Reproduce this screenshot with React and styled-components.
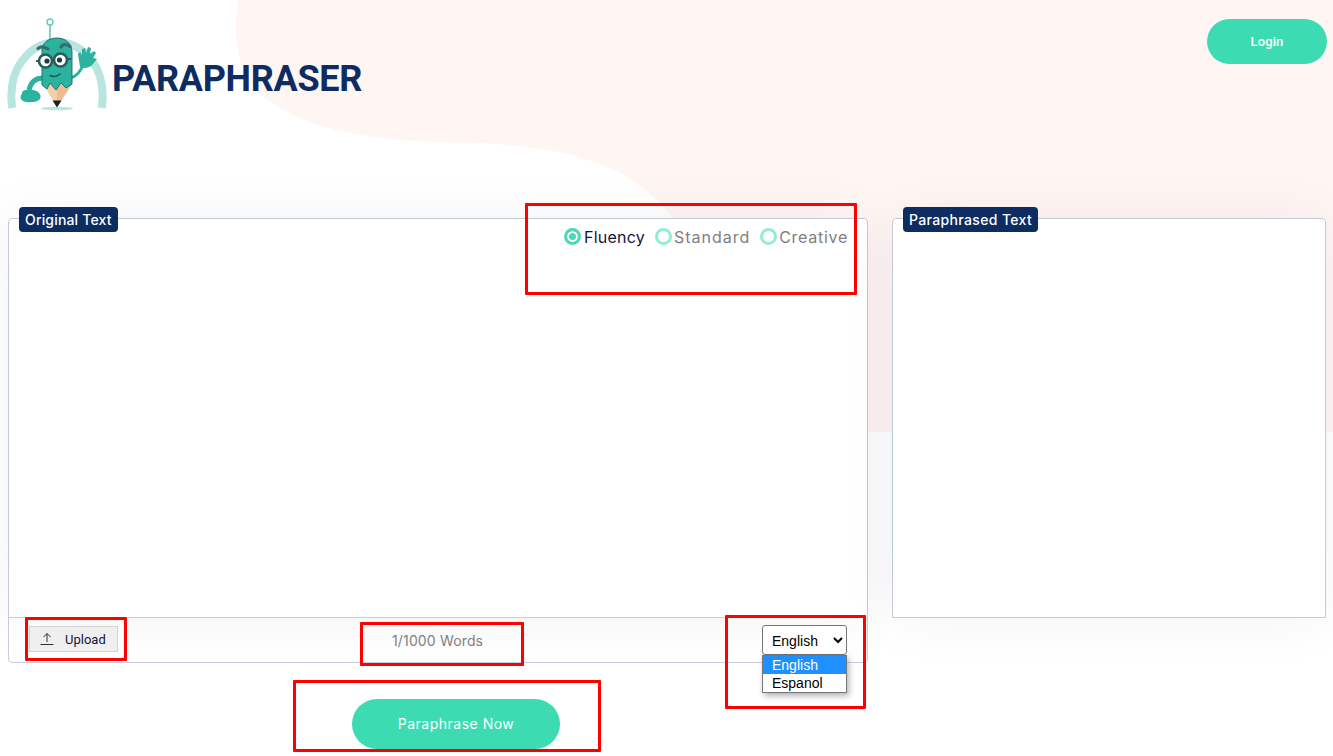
import styled, { createGlobalStyle } from "styled-components";

const Global = createGlobalStyle`
  html, body { margin: 0; padding: 0; background: #fff; }
  body { font-family: "Inter", "Liberation Sans", sans-serif; overflow: hidden; }
`;

const Page = styled.div`
  position: relative;
  width: 1333px;
  height: 756px;
  overflow: hidden;
`;
const Blob = styled.svg`
  position: absolute;
  top: 0;
  left: 0;
  z-index: 0;
`;
const Header = styled.header`
  position: relative;
  z-index: 1;
  display: flex;
  justify-content: space-between;
  align-items: flex-start;
  height: 218px;
  box-sizing: border-box;
  padding: 15px 6px 0 0;
`;
const Logo = styled.div`
  display: flex;
  align-items: flex-start;
`;
const LogoText = styled.span`
  margin: 42px 0 0 -3px;
  font-family: "Roboto", sans-serif;
  font-weight: 700;
  font-size: 36px;
  line-height: 44px;
  letter-spacing: -0.27px;
  color: #0d2c62;
`;
const Pill = styled.button`
  border: 0;
  padding: 0;
  color: #fff;
  background: #3ddbb2;
  border-radius: 25px;
  cursor: pointer;
`;
const LoginButton = styled(Pill)`
  width: 120px;
  height: 45px;
  margin-top: 4px;
  font-family: "Roboto", sans-serif;
  font-weight: 500;
  font-size: 13px;
  letter-spacing: 0.1px;
`;
const Columns = styled.main`
  position: relative;
  z-index: 1;
  display: flex;
  align-items: flex-start;
  gap: 24px;
  padding-left: 8px;
`;
const Panel = styled.section`
  position: relative;
  width: ${(p) => p.$width}px;
  box-sizing: border-box;
  border: 1px solid #c6cfdb;
  border-radius: ${(p) => (p.$square ? "4px 4px 0 0" : "4px")};
`;
const Tag = styled.span`
  position: absolute;
  z-index: 2;
  top: -12px;
  left: 10px;
  padding: 0 6px;
  height: 25px;
  line-height: 25px;
  border-radius: 4px;
  background: #0d2c62;
  color: #fff;
  font-size: 14px;
  font-weight: 500;
  letter-spacing: ${(p) => p.$spacing}px;
  white-space: nowrap;
`;
const TextBox = styled.div`
  height: ${(p) => (p.$ruled ? 399 : 398)}px;
  box-sizing: border-box;
  padding: 9px 19px 0 0;
  background: #fff;
  display: flex;
  justify-content: flex-end;
  gap: 10px;
  border-radius: 4px 4px 0 0;
  box-shadow: 0 0 60px rgba(30, 40, 70, 0.06);
  border-bottom: ${(p) => (p.$ruled ? "1px solid #c6cfdb" : "0")};
`;
const Radio = styled.label`
  display: flex;
  align-items: center;
  gap: ${(p) => (p.$checked ? 3 : 2)}px;
  height: 17px;
  font-size: 16px;
  letter-spacing: ${(p) => p.$spacing}px;
  color: ${(p) => (p.$checked ? "#14143c" : "#808080")};
`;
const RadioDot = styled.span`
  width: 17px;
  height: 17px;
  box-sizing: border-box;
  border-radius: 50%;
  border: 3px solid ${(p) => (p.$checked ? "#4fd8b5" : "#93ecd5")};
  background: ${(p) => (p.$checked ? "#4fd8b5" : "#fff")};
  box-shadow: ${(p) => (p.$checked ? "inset 0 0 0 2px #fff" : "none")};
`;
const Footer = styled.div`
  display: flex;
  align-items: flex-start;
  height: 44px;
  padding-left: 20px;
`;
const UploadButton = styled.button`
  display: flex;
  align-items: center;
  gap: 11px;
  width: 89px;
  height: 26px;
  margin-top: 8px;
  box-sizing: border-box;
  padding: 0 0 0 10px;
  border: 1px solid #d3d3d3;
  background: #efefef;
  color: #14143c;
  font-family: "Roboto", sans-serif;
  font-size: 13px;
  cursor: pointer;
`;
const WordCount = styled.span`
  margin: 14px 0 0 274px;
  font-size: 14px;
  line-height: 18px;
  letter-spacing: 0.15px;
  color: #808080;
`;
const LangBox = styled.div`
  position: relative;
  margin: 7px 20px 0 auto;
`;
const LangSelect = styled.select`
  display: block;
  width: 85px;
  height: 30px;
  box-sizing: border-box;
  padding: 1px 0 0 5px;
  font-family: "Liberation Sans", sans-serif;
  font-size: 14px;
  color: #000;
  background: #fff;
  border: 1px solid #767676;
  border-radius: 3px;
`;
const LangMenu = styled.ul`
  position: absolute;
  z-index: 3;
  top: 30px;
  left: 0;
  width: 85px;
  box-sizing: border-box;
  margin: 0;
  padding: 0;
  list-style: none;
  background: #fff;
  border: 1px solid #767676;
  box-shadow: 2px 3px 6px rgba(0, 0, 0, 0.3);
  font-family: "Liberation Sans", sans-serif;
  font-size: 14px;
`;
const LangItem = styled.li`
  height: 18px;
  line-height: 18px;
  padding-left: 9px;
  background: ${(p) => (p.$active ? "#1e90ff" : "#fff")};
  color: ${(p) => (p.$active ? "#fff" : "#000")};
`;
const ActionRow = styled.div`
  position: relative;
  z-index: 1;
  padding: 36px 0 0 352px;
`;
const SubmitButton = styled(Pill)`
  width: 208px;
  height: 50px;
  padding-bottom: 2px;
  font-family: "Inter", sans-serif;
  font-size: 14px;
  font-weight: 400;
  letter-spacing: 0.5px;
`;
const Marker = styled.div`
  position: absolute;
  z-index: 5;
  box-sizing: border-box;
  left: ${(p) => p.$x}px;
  top: ${(p) => p.$y}px;
  width: ${(p) => p.$w}px;
  height: ${(p) => p.$h}px;
  border: 3px solid #ff0000;
  border-radius: 1px;
  pointer-events: none;
`;

function Mascot() {
  return (
    <svg width="115" height="100" viewBox="0 15 115 100">
      <path d="M12 108 C11 100 11 94 12 86 C15 62 34 42 57 42 C80 42 99 62 102 86 C103 94 103 100 102 108" fill="none" stroke="#b9e5e1" strokeWidth="8" />
      <ellipse cx="57" cy="108.5" rx="16" ry="1.8" fill="#b9e5e1" />
      <circle cx="50" cy="22" r="3" fill="#fff" stroke="#62c9b8" strokeWidth="1.4" />
      <path d="M50 25 V39" stroke="#62c9b8" strokeWidth="1.6" />
      <path d="M71 78 C77 76 81 71 84 63" fill="none" stroke="#2bb3a0" strokeWidth="3" />
      <path d="M80 67 L78 54 L80 52 L82 55 L82 49 L85 48 L86 53 L88 47 L91 48 L90 54 L94 51 L96 53 L93 58 L97 59 L93 64 C90 68 84 69 80 67 Z" fill="#2bb3a0" />
      <path d="M43 78 C36 78 31 81 29 90" fill="none" stroke="#2bb3a0" strokeWidth="5" />
      <path d="M22 94 C21 90 27 89 33 90 C39 91 42 95 40 99 C37 103 27 103 23 101 C20 99 20 96 22 94 Z" fill="#2bb3a0" />
      <path d="M43 84 L57 107 L72 84 Z" fill="#f5cfa8" />
      <path d="M57 86 L72 84 L57 107 Z" fill="#eebd8f" />
      <path d="M52.5 100.5 L57 107.5 L61.5 100.5 Z" fill="#14202a" />
      <path d="M42 52 C41 42 50 38 57 38 C65 38 72 43 72 52 V84 L66 88 L61 83 L56 90 L50 83 L47 89 L42 85 Z" fill="#2bb3a0" stroke="#1b6670" strokeWidth="0.9" />
      <path d="M38 48.5 C41 46 45 47 48 49 M61 47 C63 43.5 67 44 70 46.5" fill="none" stroke="#3f6a68" strokeWidth="3.2" strokeLinecap="round" />
      <path d="M36 61 H39 M67 59 H71" stroke="#2d5a5a" strokeWidth="2" />
      <circle cx="45.5" cy="61" r="6.5" fill="#fff" stroke="#2d5a5a" strokeWidth="2.6" />
      <circle cx="60.5" cy="60" r="6.5" fill="#fff" stroke="#2d5a5a" strokeWidth="2.6" />
      <circle cx="47" cy="61" r="2.6" fill="#1c3c40" />
      <circle cx="59.5" cy="60" r="2.6" fill="#1c3c40" />
      <path d="M50 75.5 C53 77 57 76.5 60 74" fill="none" stroke="#1b4f55" strokeWidth="1.4" strokeLinecap="round" />
    </svg>
  );
}

function UploadIcon() {
  return (
    <svg width="14" height="14" viewBox="0 0 14 14" fill="none" stroke="#3a2a20" strokeWidth="1">
      <path d="M7 10 V1.5 M3.5 5 L7 1.5 L10.5 5 M0.5 12.5 H13.5" />
    </svg>
  );
}

function ModeRadio({ label, checked, spacing }) {
  return (
    <Radio $checked={checked} $spacing={spacing}>
      <RadioDot $checked={checked} />
      {label}
    </Radio>
  );
}

export default function App() {
  return (
    <Page>
      <Global />
      <Blob width="1333" height="756" viewBox="0 0 1333 756">
        <path
          d="M238 0 C232 40 238 80 268 100 C310 130 370 140 440 142 C500 143 560 146 610 168 C650 186 675 215 700 260 C740 340 790 425 868 432 L1333 432 L1333 0 Z"
          fill="#fff5f3"
        />
      </Blob>
      <Header>
        <Logo>
          <Mascot />
          <LogoText>PARAPHRASER</LogoText>
        </Logo>
        <LoginButton>Login</LoginButton>
      </Header>
      <Columns>
        <Panel $width={860}>
          <Tag $spacing={0.17}>Original Text</Tag>
          <TextBox $ruled>
            <ModeRadio label="Fluency" checked spacing={0.25} />
            <ModeRadio label="Standard" spacing={0.97} />
            <ModeRadio label="Creative" spacing={0.72} />
          </TextBox>
          <Footer>
            <UploadButton>
              <UploadIcon />
              Upload
            </UploadButton>
            <WordCount>1/1000 Words</WordCount>
            <LangBox>
              <LangSelect defaultValue="English">
                <option>English</option>
                <option>Espanol</option>
              </LangSelect>
              <LangMenu>
                <LangItem $active>English</LangItem>
                <LangItem>Espanol</LangItem>
              </LangMenu>
            </LangBox>
          </Footer>
        </Panel>
        <Panel $width={434} $square>
          <Tag $spacing={0.35}>Paraphrased Text</Tag>
          <TextBox />
        </Panel>
      </Columns>
      <ActionRow>
        <SubmitButton>Paraphrase Now</SubmitButton>
      </ActionRow>
      <Marker $x={525} $y={203} $w={332} $h={92} />
      <Marker $x={25} $y={617} $w={102} $h={44} />
      <Marker $x={360} $y={622} $w={164} $h={44} />
      <Marker $x={725} $y={615} $w={141} $h={94} />
      <Marker $x={293} $y={680} $w={308} $h={72} />
    </Page>
  );
}
